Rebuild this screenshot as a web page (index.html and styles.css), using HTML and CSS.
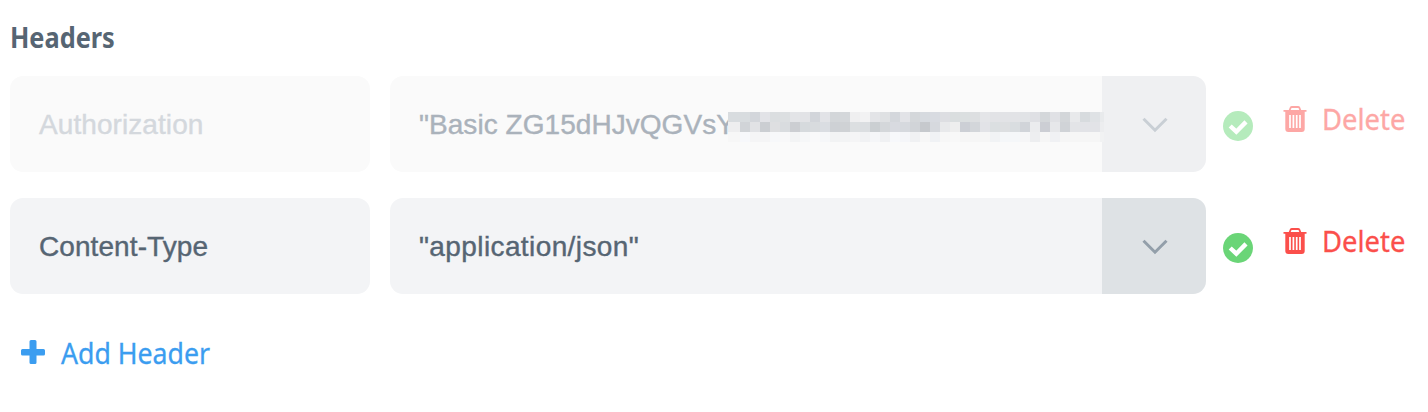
FILE: index.html
```html
<!DOCTYPE html>
<html lang="en">
<head>
<meta charset="utf-8">
<title>Headers</title>
<link rel="stylesheet" href="styles.css">
</head>
<body>
<svg class="defs" width="0" height="0" aria-hidden="true">
  <symbol id="chevron" viewBox="0 0 26 16"><path d="M1.5 1.8 13 13.2 24.5 1.8" fill="none" stroke="currentColor" stroke-width="3"/></symbol>
  <symbol id="check" viewBox="0 0 30 30"><circle cx="15" cy="15" r="15" fill="currentColor"/><path d="M7.2 15 13.3 20.7 23 10.9" fill="none" stroke="#fff" stroke-width="4.4"/></symbol>
  <symbol id="trash" viewBox="0 0 24 26"><path d="M.5 4.8H23.5M6.5 4.5 7.7 1.7Q8 1 9 1H15Q16 1 16.3 1.7L17.5 4.5" fill="none" stroke="currentColor" stroke-width="1.8"/><path d="M2.3 5H21.7V23Q21.7 26 18.7 26H5.3Q2.3 26 2.3 23Z" fill="currentColor"/><path d="M7 9V22M10.4 9V22M13.7 9V22M17 9V22" stroke="#fff" stroke-width="1.7"/></symbol>
  <symbol id="plus" viewBox="0 0 24 24"><path d="M10 0H14Q15.5 0 15.5 1.5V9H22.5Q24 9 24 10.5V14Q24 15.5 22.5 15.5H15.5V22.5Q15.5 24 14 24H10Q8.5 24 8.5 22.5V15.5H1.5Q0 15.5 0 14V10.5Q0 9 1.5 9H8.5V1.5Q8.5 0 10 0Z" fill="currentColor"/></symbol>
</svg>
<main class="panel">
  <h2 class="title"><span class="label label-title">Headers</span></h2>
  <div class="row disabled">
    <div class="field name">Authorization</div>
    <div class="combo">
      <div class="field value">"Basic ZG15dHJvQGVsY<div class="mosaic" id="mosaic"></div></div>
      <button class="toggle" aria-label="Options"><svg class="chevron"><use href="#chevron"/></svg></button>
    </div>
    <svg class="check"><use href="#check"/></svg>
    <a class="delete"><svg class="trash"><use href="#trash"/></svg><span class="label label-delete">Delete</span></a>
  </div>
  <div class="row">
    <div class="field name">Content-Type</div>
    <div class="combo">
      <div class="field value json">"application/json"</div>
      <button class="toggle" aria-label="Options"><svg class="chevron"><use href="#chevron"/></svg></button>
    </div>
    <svg class="check"><use href="#check"/></svg>
    <a class="delete"><svg class="trash"><use href="#trash"/></svg><span class="label label-delete">Delete</span></a>
  </div>
  <a class="add"><svg class="plus"><use href="#plus"/></svg><span class="label label-add">Add Header</span></a>
</main>
<script src="mosaic.js"></script>
</body>
</html>
```
FILE: styles.css
```css
* { box-sizing: border-box; }
body { margin: 0; background: #fff; font-family: "Liberation Sans", Arial, sans-serif; color: #566573; }
.defs { position: absolute; }
.panel { padding: 17px 0 0 10px; width: 1428px; }
.title { margin: 0 0 19px; height: 40px; line-height: 40px; font-size: 29px; font-weight: 700; }
.label { display: inline-block; font-family: "Noto Sans", sans-serif; transform-origin: left center; white-space: nowrap; }
.label-title { transform: scaleX(0.873); }
.label-delete { transform: scaleX(0.945); -webkit-text-stroke: 0.3px; }
.label-add { transform: scaleX(0.92); -webkit-text-stroke: 0.3px; }
.row { display: flex; height: 96px; margin-bottom: 26px; }
.field { height: 96px; line-height: 98px; font-size: 28px; background: #f3f4f6; padding-left: 29px; white-space: nowrap; -webkit-text-stroke: 0.4px; }
.name { width: 360px; margin-right: 20px; border-radius: 13px; letter-spacing: 0.08px; }
.combo { display: flex; width: 816px; border-radius: 13px; overflow: hidden; }
.value { width: 712px; letter-spacing: 0.05px; }
.json { letter-spacing: 0.4px; }
.toggle { display: flex; align-items: center; justify-content: center; width: 104px; padding: 2px 0 0 2px; border: 0; background: #dee2e5; color: #939faa; }
.chevron { width: 26px; height: 16px; }
.check { width: 30px; height: 30px; margin: 35px 0 0 16.5px; color: #6ad577; }
.delete { display: flex; margin: 23px 0 0 30.5px; height: 40px; line-height: 40px; font-size: 29px; color: #fb4f4b; }
.trash { width: 24px; height: 26px; margin: 7px 15px 0 0; }
.add { display: flex; width: 210px; margin: 39px 0 0 11px; height: 40px; line-height: 40px; font-size: 29px; color: #3b9df0; }
.plus { width: 24px; height: 24px; margin: 7px 16px 0 0; }
.disabled .combo { position: relative; }
.disabled .field { background: #fafafa; }
.disabled .name { color: #d4d8dd; }
.disabled .value { color: #aab2bb; }
.disabled .toggle { background: #eff0f2; color: #c9cfd5; }
.disabled .check { color: #b5ebbc; }
.disabled .delete { color: #fda7a5; }
.mosaic { position: absolute; left: 338px; top: 36px; display: grid; grid-template-columns: 12px repeat(36, 10px) 4px; grid-auto-rows: 10px; }
```
FILE: mosaic.js
```js
// Redacted part of the value, one colour per block.
const rows = [
  "d8dcdf d8dcdf d3d6db e2e3e7 dbdee0 dcdfe1 e3e4e7 e2e3e6 d2d5da e2e3e7 d3d6d9 d4d7da efeff0 f2f2f3 e3e4e7 dfe1e3 d4d7dc e2e3e7 d4d7da d6dadf d8dbe1 dddee2 dadedf dbdfe0 dddfe1 e4e5e8 e2e3e6 e2e3e6 e2e3e6 e1e3e6 dfe0e4 d4d7da e0e1e5 d3d6d9 e8e9eb d7dbde dfe2e5 e8eaec",
  "eeeeef d1d4d8 e1e2e5 cbced2 dedfe1 d9dcdf ccced2 d6dadd d8dbde dadde2 ced1d5 cfd2d5 dcdfe1 dbdee1 cbcfd2 d4d7da d8dae0 d6d9de d1d4d8 c6c9cd d6d9de e8e9eb eeeeee cccfd5 d3d6da e2e3e7 dbdfe1 dddfe1 d9dde0 d1d4d9 ebecee ccced4 e6e7ea d0d3d7 e3e4e7 e2e3e7 e2e3e7 ecedef",
  "f7f7f7 f7f8fb f5f5f6 f5f5f6 f7f8fa f8f8f9 f3f4f5 f6f7f8 f9f9fa f6f7f9 f2f3f4 f3f4f5 f5f5f6 f1f2f4 f5f6f8 f0f1f3 f7f8fb f5f6f9 f0f1f3 f7f7f7 f0f2f5 f7f7f7 f8f8f8 f6f6f6 f6f6f6 f6f6f6 f1f3f5 f5f7f9 f5f7f9 f6f6f7 edeef0 f6f6f6 f0f1f4 f6f6f6 f6f6f6 f6f6f6 f6f6f6 f1f2f3"
];
const mosaic = document.getElementById("mosaic");
for (const color of rows.join(" ").split(" ")) {
  const cell = document.createElement("i");
  cell.style.background = "#" + color;
  mosaic.append(cell);
}
```
